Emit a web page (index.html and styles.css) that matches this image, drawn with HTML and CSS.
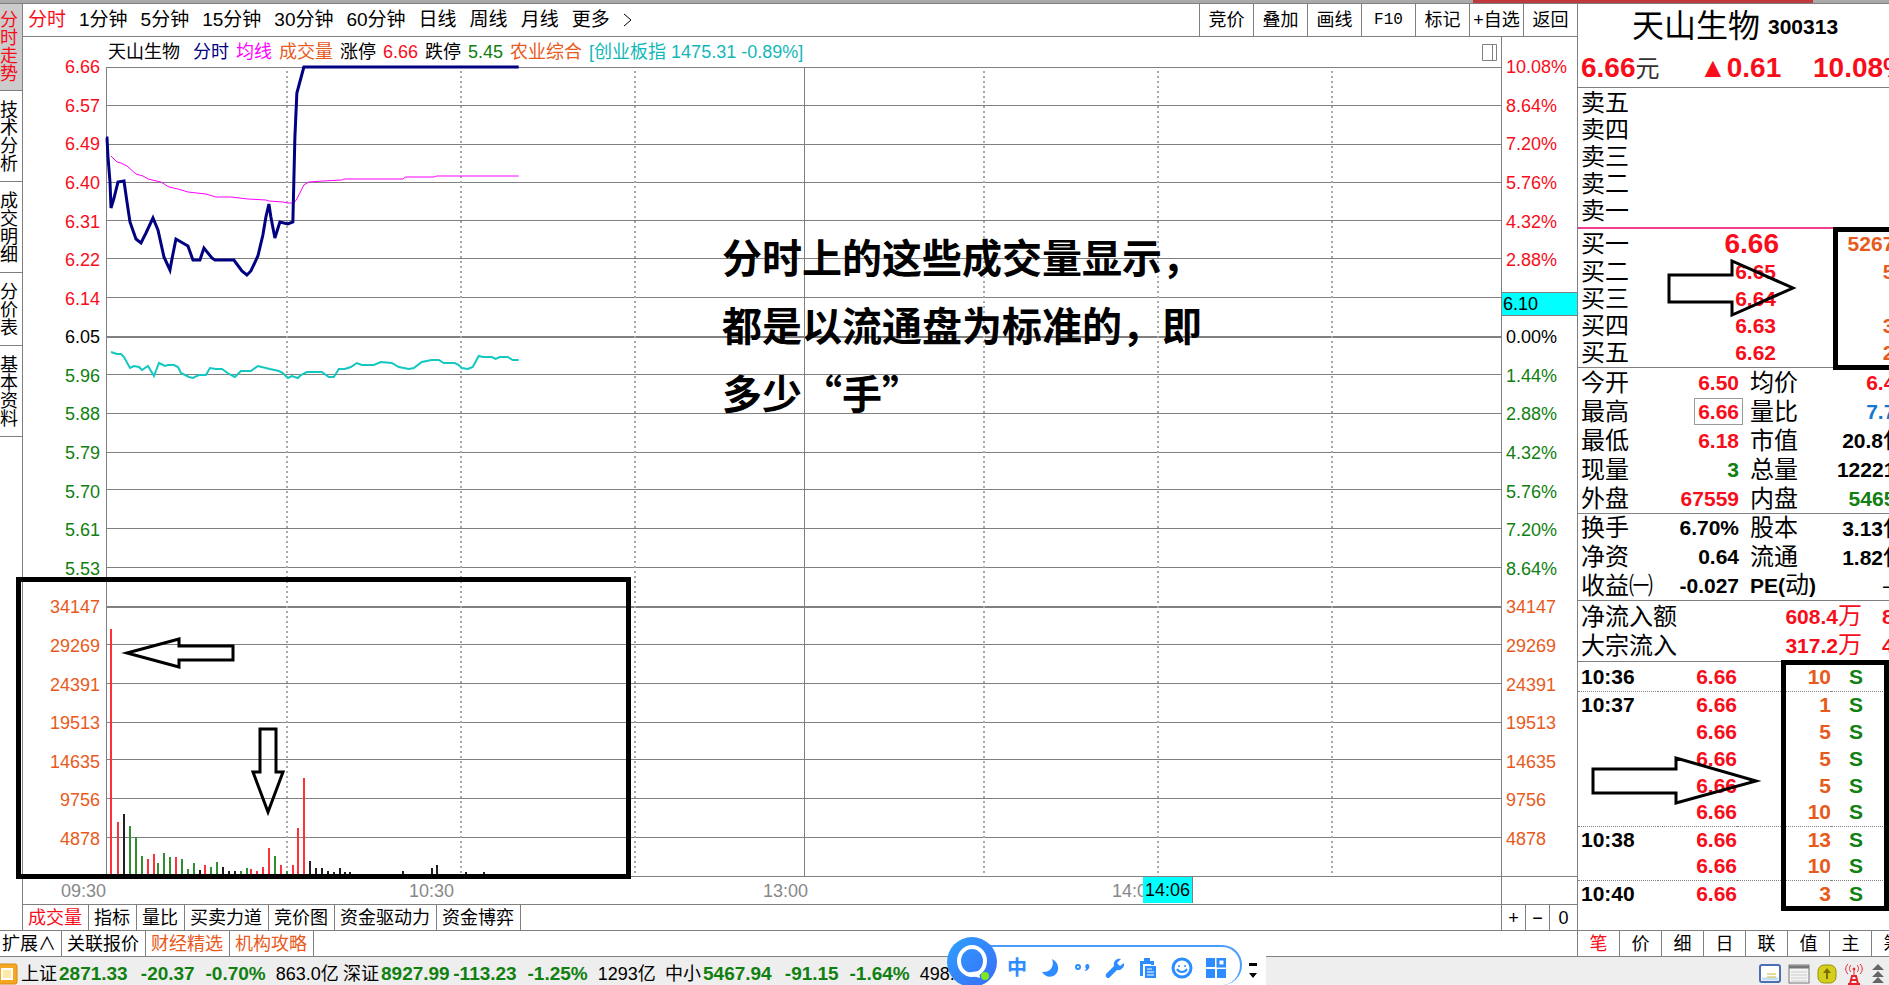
FILE: index.html
```html
<!DOCTYPE html>
<html lang="zh-CN">
<head>
    <meta charset="UTF-8">
    <meta name="viewport" content="width=device-width, initial-scale=1.0">
    <title>天山生物 300313</title>
    <link rel="stylesheet" href="styles.css">
</head>
<body>

<div class="top-strip"></div>

<div class="main">
    <div class="left">
        <div class="work">
            <nav class="side-tabs">
                <button class="active">分时走势</button>
                <button>技术分析</button>
                <button>成交明细</button>
                <button>分价表</button>
                <button>基本资料</button>
            </nav>

            <div class="chart">
                <div class="toolbar">
                    <div class="periods">
                        <button class="red">分时</button>
                        <button>1分钟</button>
                        <button>5分钟</button>
                        <button>15分钟</button>
                        <button>30分钟</button>
                        <button>60分钟</button>
                        <button>日线</button>
                        <button>周线</button>
                        <button>月线</button>
                        <button>更多</button>
                        <button aria-label="展开"><svg width="10" height="16" viewBox="0 0 10 16"><path d="M1 2l7 6-7 6" fill="none" stroke="#000"/></svg></button>
                    </div>
                    <div class="tools">
                        <button>竞价</button>
                        <button>叠加</button>
                        <button>画线</button>
                        <button class="f10">F10</button>
                        <button>标记</button>
                        <button>+自选</button>
                        <button>返回</button>
                    </div>
                </div>

                <div class="chart-body">
                    <div class="legend">
                        <span class="name">天山生物</span>
                        <span class="navy">分时</span>
                        <span class="magenta">均线</span>
                        <span class="orange">成交量</span>
                        <span>涨停</span>
                        <span class="red">6.66</span>
                        <span>跌停</span>
                        <span class="green">5.45</span>
                        <span class="orange">农业综合</span>
                        <span class="teal">[创业板指 1475.31 -0.89%]</span>
                        <svg class="split-icon" width="15" height="17" viewBox="0 0 15 17"><path d="M.5.5h14v16H.5zM10.500.5v16" fill="none" stroke="#808080"/></svg>
                    </div>
                    <div class="axis-head"></div>

                    <ul class="axis axis-left">
                        <li class="red">6.66</li>
                        <li class="red">6.57</li>
                        <li class="red">6.49</li>
                        <li class="red">6.40</li>
                        <li class="red">6.31</li>
                        <li class="red">6.22</li>
                        <li class="red">6.14</li>
                        <li>6.05</li>
                        <li class="green">5.96</li>
                        <li class="green">5.88</li>
                        <li class="green">5.79</li>
                        <li class="green">5.70</li>
                        <li class="green">5.61</li>
                        <li class="green">5.53</li>
                        <li class="orange">34147</li>
                        <li class="orange">29269</li>
                        <li class="orange">24391</li>
                        <li class="orange">19513</li>
                        <li class="orange">14635</li>
                        <li class="orange">9756</li>
                        <li class="orange">4878</li>
                    </ul>

                    <div class="plot">
                        <svg class="plot-svg" viewBox="106 67 1395 809" preserveAspectRatio="none">
                            <g class="grid">
                                <path d="M106 67H1501M106 105H1501M106 144H1501M106 182H1501M106 220H1501M106 258H1501M106 297H1501M106 374H1501M106 413H1501M106 452H1501M106 489H1501M106 528H1501M106 567H1501M106 644H1501M106 683H1501M106 722H1501M106 759H1501M106 798H1501M106 837H1501"/>
                                <path d="M804 67V876"/>
                                <path class="base" d="M106 337H1501M106 607H1501"/>
                                <path class="dots" d="M286 71V876M460 71V876M634 71V876M984 71V876M1158 71V876M1332 71V876"/>
                            </g>
                            <g class="volume">
                                <path class="up" d="M110 876V629M117 876V822M147 876V859M153 876V854M175 876V857M204 876V865M250 876V869M256 876V871M262 876V867M268 876V848M280 876V865M292 876V865M297 876V828M303 876V778"/>
                                <path class="down" d="M129 876V826M135 876V837M141 876V856M157 876V863M163 876V853M169 876V857M181 876V859M187 876V869M193 876V863M210 876V867M216 876V862M240 876V871M246 876V868M274 876V856M286 876V871"/>
                                <path class="flat" d="M123 876V814M199 876V870M222 876V867M228 876V871M234 876V871M309 876V861M315 876V868M321 876V868M327 876V871M333 876V872M339 876V868M344 876V872M349 876V872M402 876V871M431 876V868M436 876V865M465 876V872M483 876V872"/>
                            </g>
                            <polyline class="line-index" points="110,352 116,354 120,354 123,357 129,368 133,366 138,367 141,370 147,366 153,376 158,363 164,366 167,365 173,365 177,367 180,373 188,377 192,378 198,375 205,375 209,368 215,369 221,369 224,371 228,374 234,377 240,371 250,371 257,366 269,369 278,371 282,373 287,378 291,376 297,378 300,375 306,372 321,372 328,377 333,377 338,369 344,369 350,367 356,363 361,365 373,365 380,362 391,363 398,367 408,369 413,368 421,362 431,360 438,360 443,363 454,363 458,365 461,368 467,369 472,367 478,356 482,357 491,357 495,359 499,357 507,357 512,360 518,360"/>
                            <polyline class="line-avg" points="110,156 116,162 120,163 126,166 135,174 142,176 147,179 160,182 168,187 177,189 187,192 205,194 215,197 230,197 247,199 265,200 268,201 282,202 287,203 293,203 296,199 303,185 308,182 322,181 341,180 343,179 402,179 405,177 433,177 436,176 518,176"/>
                            <polyline class="line-price" points="105,138 106,138 107,157 109,182 110,208 113,198 117,182 123,181 126,202 129,222 135,239 140,243 145,233 152,218 157,230 163,257 169,270 171,259 175,239 187,246 192,260 199,260 203,248 211,258 214,260 233,260 241,271 246,275 250,271 257,256 262,235 265,217 268,204 270,217 274,238 279,222 287,224 292,222 293,180 294,138 296,93 303,67 518,67"/>
                        </svg>
                        <p class="note">分时上的这些成交量显示，<br>都是以流通盘为标准的，即<br>多少“手”</p>
                        <div class="mark mark-volume"></div>
                        <svg class="arrow arrow-left" width="114" height="34" viewBox="0 0 114 34"><path d="M5 17L57 3v7h54v14H57v7z"/></svg>
                        <svg class="arrow arrow-down" width="38" height="92" viewBox="0 0 38 92"><path d="M19 86L4 46h7V3h16v43h7z"/></svg>
                    </div>

                    <ul class="axis axis-right">
                        <li class="red">10.08%</li>
                        <li class="red">8.64%</li>
                        <li class="red">7.20%</li>
                        <li class="red">5.76%</li>
                        <li class="red">4.32%</li>
                        <li class="red">2.88%</li>
                        <li class="cursor"><span>6.10</span></li>
                        <li>0.00%</li>
                        <li class="green">1.44%</li>
                        <li class="green">2.88%</li>
                        <li class="green">4.32%</li>
                        <li class="green">5.76%</li>
                        <li class="green">7.20%</li>
                        <li class="green">8.64%</li>
                        <li class="orange">34147</li>
                        <li class="orange">29269</li>
                        <li class="orange">24391</li>
                        <li class="orange">19513</li>
                        <li class="orange">14635</li>
                        <li class="orange">9756</li>
                        <li class="orange">4878</li>
                    </ul>

                    <div class="times">
                        <span>09:30</span>
                        <span>10:30</span>
                        <span>13:00</span>
                        <span>14:00<b class="time-cursor">14:06</b></span>
                    </div>
                    <div class="axis-foot"></div>
                </div>

                <div class="tabs">
                    <button class="red">成交量</button>
                    <button>指标</button>
                    <button>量比</button>
                    <button>买卖力道</button>
                    <button>竞价图</button>
                    <button>资金驱动力</button>
                    <button>资金博弈</button>
                    <div class="zoom">
                        <button>+</button>
                        <button>−</button>
                        <button>0</button>
                    </div>
                </div>
            </div>
        </div>

        <div class="tabs tabs-more">
            <button>扩展∧</button>
            <button>关联报价</button>
            <button class="orange">财经精选</button>
            <button class="orange">机构攻略</button>
        </div>
    </div>

    <aside class="quote">
        <header class="quote-head">
            <h1>天山生物 <small>300313</small></h1>
            <div class="last">
                <span class="price">6.66<i>元</i></span>
                <span class="change">▲0.61</span>
                <span class="percent">10.08%</span>
            </div>
        </header>

        <table class="book asks">
            <tr><th>卖五</th><td></td><td></td></tr>
            <tr><th>卖四</th><td></td><td></td></tr>
            <tr><th>卖三</th><td></td><td></td></tr>
            <tr><th>卖二</th><td></td><td></td></tr>
            <tr><th>卖一</th><td></td><td></td></tr>
        </table>

        <div class="bids-box">
            <table class="book bids">
                <tr><th>买一</th><td class="red best">6.66</td><td class="orange">52671</td></tr>
                <tr><th>买二</th><td class="red">6.65</td><td class="orange">55</td></tr>
                <tr><th>买三</th><td class="red">6.64</td><td class="orange"></td></tr>
                <tr><th>买四</th><td class="red">6.63</td><td class="orange">30</td></tr>
                <tr><th>买五</th><td class="red">6.62</td><td class="orange">20</td></tr>
            </table>
            <div class="mark mark-bids"></div>
            <svg class="arrow arrow-bids" width="134" height="62" viewBox="0 0 134 62"><path d="M4 18h63V4l61 27-61 27V45H4z"/></svg>
        </div>

        <table class="stats">
            <tr><th>今开</th><td class="red">6.50</td><th>均价</th><td class="red">6.42</td></tr>
            <tr><th>最高</th><td class="red"><span class="boxed">6.66</span></td><th>量比</th><td class="blue">7.70</td></tr>
            <tr><th>最低</th><td class="red">6.18</td><th>市值</th><td>20.8<i>亿</i></td></tr>
            <tr><th>现量</th><td class="green">3</td><th>总量</th><td>122214</td></tr>
            <tr><th>外盘</th><td class="red">67559</td><th>内盘</th><td class="green">54655</td></tr>
        </table>

        <table class="stats stats-base">
            <tr><th>换手</th><td>6.70%</td><th>股本</th><td>3.13<i>亿</i></td></tr>
            <tr><th>净资</th><td>0.64</td><th>流通</th><td>1.82<i>亿</i></td></tr>
            <tr><th>收益㈠</th><td>-0.027</td><th><b>PE(</b>动<b>)</b></th><td><i>—</i></td></tr>
        </table>

        <table class="flow">
            <tr><th>净流入额</th><td>608.4<i>万</i></td><td>8%</td></tr>
            <tr><th>大宗流入</th><td>317.2<i>万</i></td><td>4%</td></tr>
        </table>

        <div class="ticks-box">
            <table class="ticks">
                <tr class="last-of-minute"><th>10:36</th><td class="red">6.66</td><td class="orange">10</td><td class="green">S</td></tr>
                <tr><th>10:37</th><td class="red">6.66</td><td class="orange">1</td><td class="green">S</td></tr>
                <tr><th></th><td class="red">6.66</td><td class="orange">5</td><td class="green">S</td></tr>
                <tr><th></th><td class="red">6.66</td><td class="orange">5</td><td class="green">S</td></tr>
                <tr><th></th><td class="red">6.66</td><td class="orange">5</td><td class="green">S</td></tr>
                <tr class="last-of-minute"><th></th><td class="red">6.66</td><td class="orange">10</td><td class="green">S</td></tr>
                <tr><th>10:38</th><td class="red">6.66</td><td class="orange">13</td><td class="green">S</td></tr>
                <tr class="last-of-minute"><th></th><td class="red">6.66</td><td class="orange">10</td><td class="green">S</td></tr>
                <tr><th>10:40</th><td class="red">6.66</td><td class="orange">3</td><td class="green">S</td></tr>
            </table>
            <div class="mark mark-ticks"></div>
            <svg class="arrow arrow-ticks" width="174" height="54" viewBox="0 0 174 54"><path d="M4 15h83V4l80 23-80 22V39H4z"/></svg>
        </div>

        <div class="quote-tabs">
            <button class="red">笔</button>
            <button>价</button>
            <button>细</button>
            <button>日</button>
            <button>联</button>
            <button>值</button>
            <button>主</button>
            <button>筹</button>
        </div>
    </aside>
</div>

<footer class="status">
    <svg class="status-logo" width="18" height="22" viewBox="0 0 18 22"><rect x="-3" y="1" width="20" height="20" rx="2" fill="#f5a623" stroke="#d98a10"/><rect x="2" y="6" width="10" height="10" fill="#ffe9a8" stroke="#fff" stroke-width="2"/></svg>
    <div class="index"><span>上证</span><b>2871.33</b><b class="diff">-20.37</b><b class="pct">-0.70%</b><span>863.0亿</span></div>
    <div class="index"><span>深证</span><b>8927.99</b><b class="diff">-113.23</b><b class="pct">-1.25%</b><span>1293亿</span></div>
    <div class="index"><span>中小</span><b>5467.94</b><b class="diff">-91.15</b><b class="pct">-1.64%</b><span>498.2亿</span></div>
    <div class="tray">
        <svg width="22" height="20" viewBox="0 0 22 20"><rect x="1" y="1" width="20" height="17" rx="2" fill="#fff" stroke="#4a6fb5" stroke-width="2"/><path d="M3 15h16" stroke="#c5dcf5" stroke-width="3"/><path d="M8 10h9M8 13h9" stroke="#c9b82e"/></svg>
        <svg width="22" height="20" viewBox="0 0 22 20"><rect x="1" y="1" width="20" height="18" fill="#f4f4f4" stroke="#777"/><path d="M1 3h20" stroke="#777" stroke-width="3"/><path d="M3 8h16M3 11h16M3 14h16M3 17h16" stroke="#ccc"/></svg>
        <svg width="20" height="20" viewBox="0 0 20 20"><rect x="1" y="1" width="18" height="18" rx="6" fill="#d4cf1c" stroke="#99920a"/><path d="M10 4l4 5h-3v6H9V9H6z" fill="#7a7000"/></svg>
        <svg width="20" height="22" viewBox="0 0 20 22" fill="none" stroke="#e8202a"><path d="M10 6v7M7 2c-2 2-2 5 0 7M4 1C1 4 1 8 4 11M13 2c2 2 2 5 0 7M16 1c3 3 3 7 0 10" stroke-width="1"/><circle cx="10" cy="6" r="1" fill="#e8202a"/><path d="M8 13h4l2 8H6z" stroke-width="2"/><path d="M4 21h12M7 17h6" stroke-width="2"/></svg>
        <svg width="14" height="20" viewBox="0 0 14 20"><path d="M7 0l6 6H1zM7 7l6 6H1zM7 13l6 6H1z" fill="#666"/></svg>
    </div>
</footer>

<div class="ime">
    <svg class="ime-logo" width="52" height="52" viewBox="0 0 52 52">
        <defs><linearGradient id="ime-blue" x1="0" y1="0" x2="1" y2="1"><stop offset="0" stop-color="#2da0ff"/><stop offset="1" stop-color="#3b6cf6"/></linearGradient></defs>
        <circle cx="26" cy="26" r="25" fill="url(#ime-blue)"/>
        <ellipse cx="26" cy="25" rx="13" ry="14" fill="none" stroke="#fff" stroke-width="4"/>
        <path d="M19 37c5 2 9 3 15 5l-1-7z" fill="#fff"/>
        <circle cx="39" cy="40" r="4" fill="#7ee81e"/>
    </svg>
    <div class="ime-bar">
        <button class="ime-lang">中</button>
        <button aria-label="半角"><svg width="20" height="20" viewBox="0 0 20 20"><path d="M12 1c3 7-2 14-10 13 3 5 9 6 13 3C20 13 19 4 12 1z" fill="#2d8cff"/></svg></button>
        <button aria-label="标点"><svg width="20" height="20" viewBox="0 0 20 20"><circle cx="5" cy="9" r="2" fill="none" stroke="#2d8cff" stroke-width="2"/><path d="M11 13c2-1 2-2 2-3-1 0-1-4 1-4 4 0 3 7-3 7z" fill="#2d8cff"/></svg></button>
        <button aria-label="工具"><svg width="20" height="20" viewBox="0 0 20 20"><path d="M1 16l8-8c-1-4 2-8 7-7l-4 4 3 3 4-3c1 4-3 8-7 7l-8 8c-2 1-4-2-3-4z" fill="#2d8cff"/></svg></button>
        <button aria-label="剪贴板"><svg width="20" height="20" viewBox="0 0 20 20"><path d="M2 3h4V0h6v3h4v4h-3V6H5v12H2z" fill="#2d8cff"/><path d="M7 8h11v12H7z" fill="#2d8cff"/><path d="M9 11h5M9 14h7M9 17h7" stroke="#fff"/></svg></button>
        <button aria-label="表情"><svg width="22" height="22" viewBox="0 0 22 22"><circle cx="11" cy="11" r="9" fill="none" stroke="#2d8cff" stroke-width="3"/><circle cx="8" cy="9" r="1" fill="#2d8cff"/><circle cx="14" cy="9" r="1" fill="#2d8cff"/><path d="M6 12c2 4 8 4 10 0" fill="none" stroke="#2d8cff" stroke-width="2"/></svg></button>
        <button aria-label="更多工具"><svg width="20" height="20" viewBox="0 0 20 20"><path d="M0 0h9v9H0zM0 11h9v9H0zM11 11h9v9h-9z" fill="#2d8cff"/><path d="M12 1h7v7h-7z" fill="none" stroke="#2d8cff" stroke-width="3"/></svg></button>
    </div>
    <svg class="ime-more" width="10" height="16" viewBox="0 0 10 16"><path d="M1 0h8v3H1zM1 10h8l-4 5z"/></svg>
</div>

</body>
</html>
```
FILE: styles.css
```css
* {
    box-sizing: border-box;
}

body {
    display: flex;
    flex-direction: column;
    height: 100vh;
    margin: 0;
    overflow: hidden;
    background-color: #fff;
    color: #000;
    font-family: "Liberation Sans", "Noto Sans CJK SC", sans-serif;
    font-size: 18px;
    line-height: 24px;
    white-space: nowrap;
}

button {
    margin: 0;
    padding: 0;
    border: none;
    background: none;
    color: inherit;
    font: inherit;
    cursor: pointer;
}

i {
    font-style: normal;
    font-weight: normal;
}

.red { color: #f80d1b; }
.green { color: #108010; }
.orange { color: #e85a1c; }
.navy { color: #000080; }
.magenta { color: #f0f; }
.teal { color: #12b8b8; }
.blue { color: #1478d2; }

.top-strip {
    flex: none;
    height: 4px;
    background: linear-gradient(90deg, #aaa 78%, #c0393f 78%, #c0393f 96%, #aaa 96%);
    border-bottom: 1px solid #808080;
}

.main {
    display: flex;
    flex: 1;
    min-height: 0;
    border-bottom: 1px solid #808080;
}

.left {
    display: flex;
    flex-direction: column;
    flex: 1;
    min-width: 0;
}

.work {
    display: flex;
    flex: 1;
    min-height: 0;
}

/* left vertical tabs */
.side-tabs {
    flex: none;
    width: 23px;
    border-right: 1px solid #808080;
}

.side-tabs button {
    display: block;
    width: 100%;
    padding: 10px 4px 8px 0;
    border-bottom: 1px solid #808080;
    line-height: 18px;
    white-space: normal;
    word-break: break-all;
}

.side-tabs .active {
    padding: 7px 4px 7px 0;
    background-color: #ccc;
    color: #f80d1b;
}

.chart {
    display: flex;
    flex-direction: column;
    flex: 1;
    min-width: 0;
}

/* toolbar */
.toolbar {
    display: flex;
    justify-content: space-between;
    flex: none;
    height: 33px;
    border-bottom: 1px solid #808080;
}

.periods {
    display: flex;
    align-items: center;
    gap: 13px;
    padding-left: 5px;
}

.periods button {
    font-size: 19px;
}

.periods svg {
    display: block;
}

.tools {
    display: flex;
}

.tools button {
    width: 54px;
    border-left: 1px solid #808080;
}

.tools .f10 {
    font-family: "Liberation Mono", monospace;
    font-size: 16px;
}

/* chart */
.chart-body {
    display: grid;
    grid-template-columns: 83px 1fr 76px;
    grid-template-rows: 30px 1fr 27px;
    flex: 1;
    min-height: 0;
}

.legend {
    grid-column: 1 / 3;
    display: flex;
    align-items: center;
    gap: 7px;
    padding: 0 4px 0 85px;
}

.legend .name {
    margin-right: 6px;
}

.split-icon {
    margin-left: auto;
}

.axis-head {
    border-left: 1px solid #808080;
}

.axis {
    display: flex;
    flex-direction: column;
    margin: 0;
    padding: 0;
    list-style: none;
}

.axis li {
    position: relative;
    top: -19px;
    display: flex;
    flex: 1;
    align-items: center;
    min-height: 0;
}

.axis-left li {
    justify-content: flex-end;
    padding-right: 6px;
}

.axis-right {
    border-left: 1px solid #808080;
}

.axis-right li {
    padding-left: 4px;
}

.axis-right .cursor {
    padding: 0;
}

.cursor span {
    width: 100%;
    margin-top: 10px;
    padding-left: 1px;
    border: solid #808080;
    border-width: 1px 0;
    background-color: #0ff;
    line-height: 22px;
}

.plot {
    position: relative;
    border-left: 1px solid #808080;
    border-bottom: 1px solid #808080;
}

.plot-svg {
    position: absolute;
    left: 0;
    top: 0;
    width: 100%;
    height: 100%;
    overflow: visible;
}

.plot-svg path,
.plot-svg polyline {
    fill: none;
    vector-effect: non-scaling-stroke;
}

.grid path {
    stroke: #808080;
    shape-rendering: crispEdges;
}

.grid .base {
    stroke-width: 2;
}

.grid .dots {
    stroke: #a8a8a8;
    stroke-width: 2;
    stroke-dasharray: 2 3;
}

.volume path {
    stroke-width: 2;
    shape-rendering: crispEdges;
}

.volume .up { stroke: #ff3038; }
.volume .down { stroke: #309030; }
.volume .flat { stroke: #202020; }

.line-price {
    stroke: #000080;
    stroke-width: 3;
}

.line-avg {
    stroke: #f0f;
}

.line-index {
    stroke: #12c8c0;
    stroke-width: 2;
}

/* hand-drawn notes over the page */
.note {
    position: absolute;
    left: 615px;
    top: 155px;
    margin: 0;
    font-family: "Noto Sans CJK SC", sans-serif;
    font-size: 40px;
    font-weight: bold;
    line-height: 68px;
}

.mark {
    position: absolute;
    border: 5px solid #000;
    pointer-events: none;
}

.mark-volume {
    left: -91px;
    top: 510px;
    width: 615px;
    bottom: -3px;
}

.arrow {
    position: absolute;
    overflow: visible;
    fill: none;
    stroke: #000;
    stroke-width: 3;
    pointer-events: none;
}

.arrow-left {
    left: 15px;
    top: 569px;
}

.arrow-down {
    left: 142px;
    top: 659px;
}

.times {
    grid-column: 1 / 3;
    display: grid;
    grid-template-columns: 83px 348fr 354fr 349fr 344fr;
    align-items: center;
    color: #888;
    text-align: right;
}

.times span {
    position: relative;
}

.time-cursor {
    position: absolute;
    right: -36px;
    top: -2px;
    padding: 1px 2px;
    border-right: 1px solid #808080;
    background-color: #0ff;
    color: #000;
    font-weight: normal;
}

.axis-foot {
    border-top: 1px solid #808080;
    border-left: 1px solid #808080;
    margin-top: -1px;
}

/* tab rows */
.tabs {
    display: flex;
    flex: none;
    height: 26px;
    border-top: 1px solid #808080;
}

.tabs button {
    padding: 0 6px 0 5px;
    border-right: 1px solid #808080;
}

.tabs-more button:first-child {
    padding: 0 5px 0 2px;
}

.zoom {
    display: flex;
    margin-left: auto;
    border-left: 1px solid #808080;
}

.tabs .zoom button {
    width: 24px;
    padding: 0;
}

.tabs .zoom button:last-child {
    width: 27px;
    border-right: none;
}

/* quote panel */
.quote {
    display: flex;
    flex-direction: column;
    flex: none;
    width: 312px;
    border-left: 1px solid #808080;
    overflow: hidden;
    font-size: 21px;
    font-weight: bold;
}

.quote-head {
    flex: none;
    height: 84px;
    border-bottom: 1px solid #808080;
}

.quote-head h1 {
    display: flex;
    align-items: center;
    gap: 8px;
    margin: 0;
    padding: 3px 0 0 54px;
    font-size: 32px;
    font-weight: normal;
    line-height: 36px;
}

.quote-head small {
    padding-top: 2px;
    font-size: 21px;
    font-weight: bold;
}

.last {
    display: grid;
    grid-template-columns: 118px 114px 93px;
    padding: 3px 0 0 3px;
    color: #f80d1b;
    font-size: 28px;
    line-height: 40px;
}

.last i {
    color: #333;
    font-size: 24px;
}

table {
    flex: none;
    width: 331px;
    border-collapse: collapse;
    table-layout: fixed;
    line-height: 24px;
}

th,
td {
    padding: 0;
    text-align: right;
}

th {
    text-align: left;
    font-size: 24px;
    font-weight: normal;
}

td i {
    font-size: 24px;
}

th:first-child {
    padding-left: 3px;
}

.book th { width: 76px; }
.book td { padding-right: 3px; }
.book td:nth-child(2) { width: 125px; }

.asks {
    margin: 1px 0 3px;
}

.asks tr {
    height: 27px;
}

.bids-box {
    position: relative;
    flex: none;
    padding-bottom: 1px;
    border-top: 2px solid #f03c8c;
    border-bottom: 1px solid #808080;
}

.bids tr {
    height: 27px;
}

.bids tr:first-child {
    height: 29px;
}

.bids .best {
    padding-right: 0;
    font-size: 28px;
}

.mark-bids {
    left: 255px;
    top: -2px;
    right: -30px;
    bottom: -3px;
}

.arrow-bids {
    left: 87px;
    top: 28px;
}

.stats th:first-child { width: 76px; }
.stats td:nth-child(2) { width: 85px; }
.stats th:nth-child(3) { width: 81px; padding-left: 11px; }
.stats td:nth-child(4) { padding-right: 2px; }

.stats tr,
.flow tr {
    height: 29px;
}

.stats b {
    font-size: 21px;
}

.boxed {
    margin-right: -4px;
    padding: 1px 3px;
    border: 1px solid #999;
}

.stats-base {
    border-top: 1px solid #808080;
    border-bottom: 1px solid #808080;
}

.flow {
    margin: 1px 0;
}

.flow th { width: 110px; }
.flow td:nth-child(2) { width: 174px; }
.flow td:nth-child(3) { padding-left: 20px; text-align: left; }

.flow td {
    color: #f80d1b;
}

.ticks-box {
    position: relative;
    flex: 1;
    padding-top: 2px;
    border-top: 1px solid #808080;
}

.ticks th {
    width: 80px;
    font-size: 21px;
    font-weight: bold;
}

.ticks td:nth-child(2) { width: 79px; }
.ticks td:nth-child(3) { width: 94px; }
.ticks td:nth-child(4) { padding-left: 18px; text-align: left; }

.ticks tr {
    height: 27px;
}

.ticks .last-of-minute {
    border-bottom: 1px dotted #808080;
}

.mark-ticks {
    left: 203px;
    top: -2px;
    right: 0;
    height: 251px;
}

.arrow-ticks {
    left: 11px;
    top: 92px;
}

.quote-tabs {
    display: flex;
    flex: none;
    height: 26px;
    border-top: 1px solid #808080;
    font-size: 18px;
    font-weight: normal;
}

.quote-tabs button {
    flex: none;
    width: 42px;
    border-right: 1px solid #808080;
}

/* status bar */
.status {
    display: flex;
    align-items: center;
    flex: none;
    height: 28px;
    padding-top: 5px;
    background-color: #eee;
}

.status-logo {
    flex: none;
    margin-right: 3px;
}

.index {
    display: flex;
    flex: none;
    width: 322px;
}

.index b {
    margin-left: 2px;
    color: #108010;
    font-size: 19px;
    text-align: right;
}

.index .diff { width: 65px; }
.index .pct { width: 69px; }

.index span:last-child {
    margin-left: 10px;
}

.tray {
    display: flex;
    align-items: center;
    gap: 7px;
    margin-left: auto;
    padding-right: 4px;
}

/* floating input method bar */
.ime {
    position: absolute;
    left: 972px;
    bottom: 0;
    display: flex;
    width: 294px;
    height: 40px;
    background-color: #fff;
}

.ime-logo {
    position: absolute;
    left: -26px;
    bottom: -3px;
}

.ime-bar {
    display: flex;
    align-items: center;
    justify-content: space-between;
    width: 270px;
    padding: 4px 14px 0 35px;
    border: solid #4a9bff;
    border-width: 2px 2px 0 0;
    border-radius: 0 20px 20px 0;
}

.ime svg {
    display: block;
}

.ime-lang {
    color: #2d8cff;
    font-size: 20px;
    font-weight: bold;
}

.ime-more {
    margin: 18px 0 0 6px;
}
```
